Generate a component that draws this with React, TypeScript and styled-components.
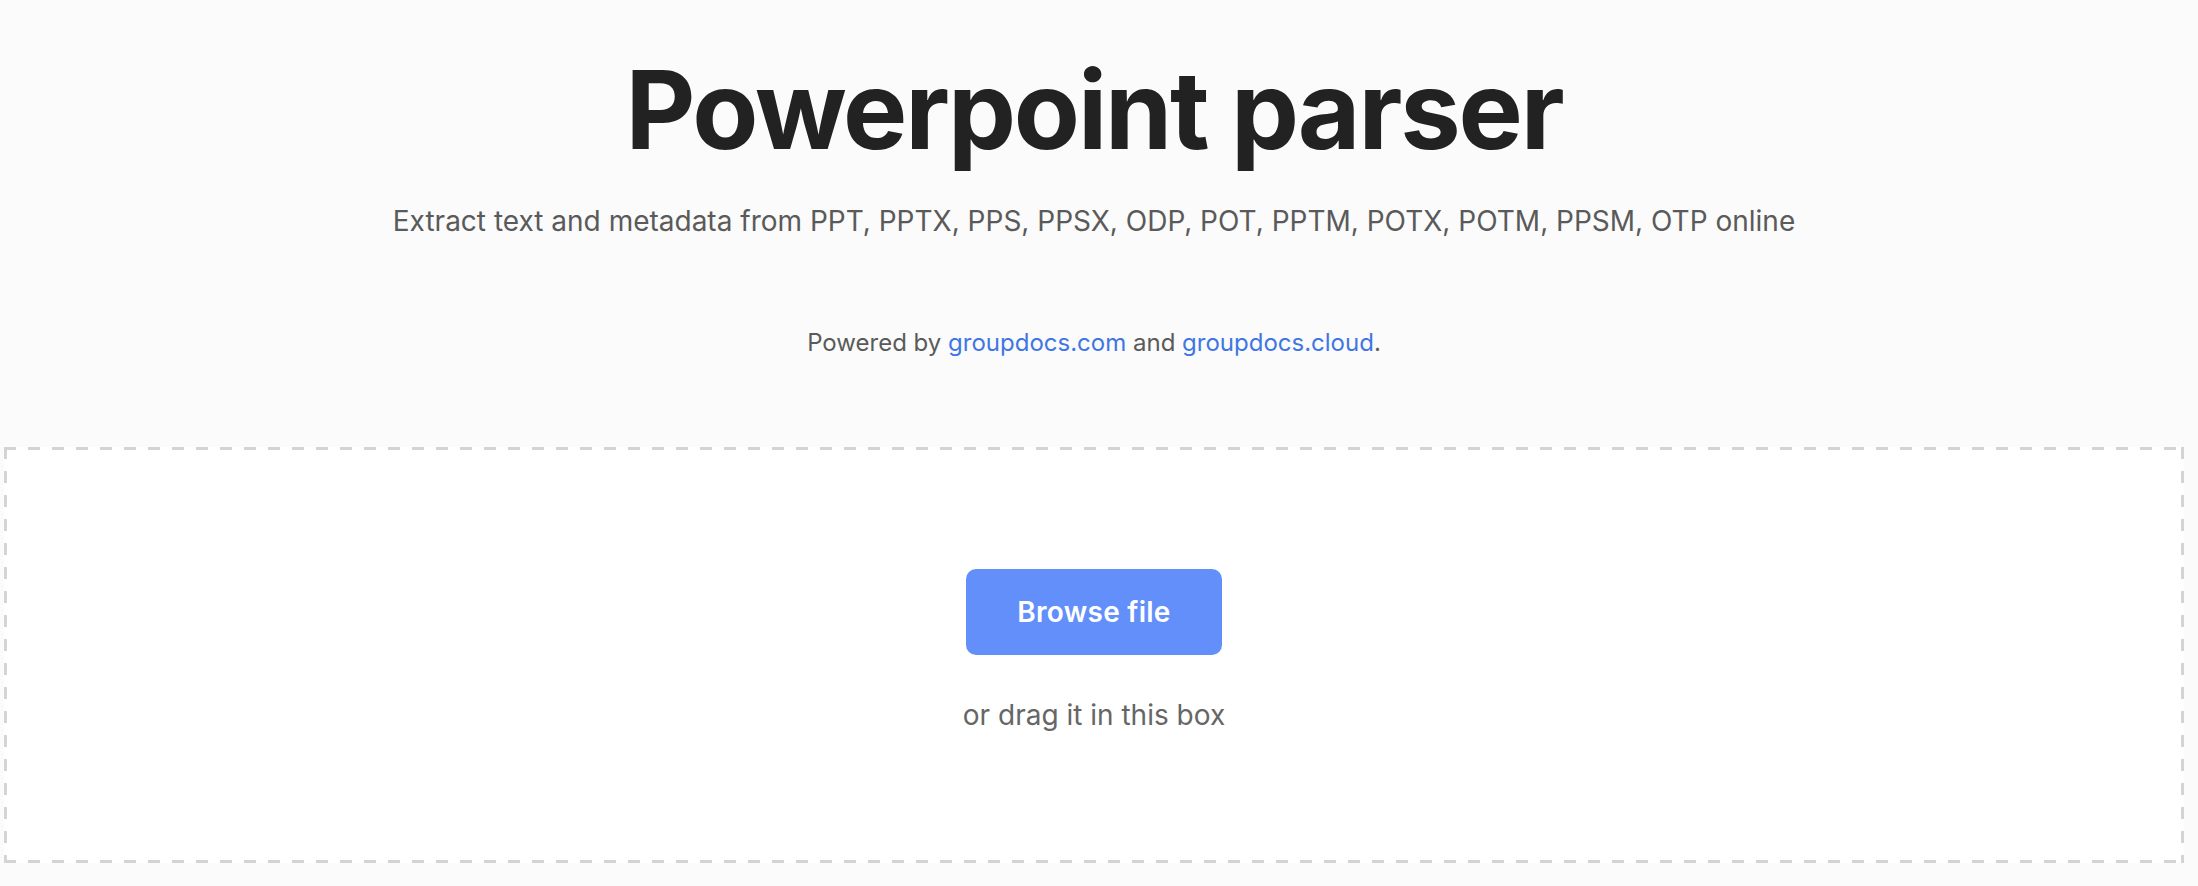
import React from "react";
import styled, { createGlobalStyle } from "styled-components";

const GlobalStyle = createGlobalStyle`
  html, body {
    margin: 0;
    padding: 0;
    background: #fbfbfb;
  }
  body {
    font-family: Inter, "Noto Sans", "Liberation Sans", sans-serif;
    -webkit-font-smoothing: antialiased;
  }
`;

const Page = styled.div`
  padding: 0 14px 0 4px;
`;

const Header = styled.header`
  display: flex;
  flex-direction: column;
  align-items: center;
  text-align: center;
  padding-top: 46px;
`;

const Title = styled.h1`
  margin: 0;
  font-size: 108px;
  line-height: 128px;
  font-weight: 700;
  letter-spacing: -0.02em;
  color: #222222;
`;

const Subtitle = styled.p`
  margin: 29px 0 0;
  font-size: 28px;
  line-height: 36px;
  color: #5a5a5a;
`;

const Powered = styled.p`
  margin: 88px 0 0;
  font-size: 24px;
  line-height: 32px;
  color: #5a5a5a;

  a {
    color: #3f76e4;
    text-decoration: none;
  }
`;

/* dashed frame drawn with gradients so dash length and gap can be set exactly */
const dash = "#d4d4d4";

const DropZone = styled.div`
  margin-top: 88px;
  height: 416px;
  box-sizing: border-box;
  background-color: #ffffff;
  background-image:
    linear-gradient(to right, ${dash} 50%, transparent 50%),
    linear-gradient(to right, ${dash} 50%, transparent 50%),
    linear-gradient(to bottom, ${dash} 50%, transparent 50%),
    linear-gradient(to bottom, ${dash} 50%, transparent 50%);
  background-size: 24px 3px, 24px 3px, 3px 24px, 3px 24px;
  background-position: 0 0, 0 100%, 0 0, 100% 0;
  background-repeat: repeat-x, repeat-x, repeat-y, repeat-y;
  display: flex;
  flex-direction: column;
  align-items: center;
  padding-top: 122px;
`;

const BrowseButton = styled.button`
  width: 256px;
  height: 86px;
  border: none;
  border-radius: 10px;
  background: #628ff9;
  color: #ffffff;
  font-family: inherit;
  font-size: 28px;
  font-weight: 600;
  letter-spacing: 0.01em;
  cursor: pointer;
`;

const DragHint = styled.div`
  margin-top: 42px;
  font-size: 28px;
  line-height: 36px;
  color: #666666;
`;

export default function App() {
  return (
    <Page>
      <GlobalStyle />
      <Header>
        <Title>Powerpoint parser</Title>
        <Subtitle>
          Extract text and metadata from PPT, PPTX, PPS, PPSX, ODP, POT, PPTM,
          POTX, POTM, PPSM, OTP online
        </Subtitle>
        <Powered>
          Powered by <a href="#">groupdocs.com</a> and{" "}
          <a href="#">groupdocs.cloud</a>.
        </Powered>
      </Header>
      <DropZone>
        <BrowseButton>Browse file</BrowseButton>
        <DragHint>or drag it in this box</DragHint>
      </DropZone>
    </Page>
  );
}
